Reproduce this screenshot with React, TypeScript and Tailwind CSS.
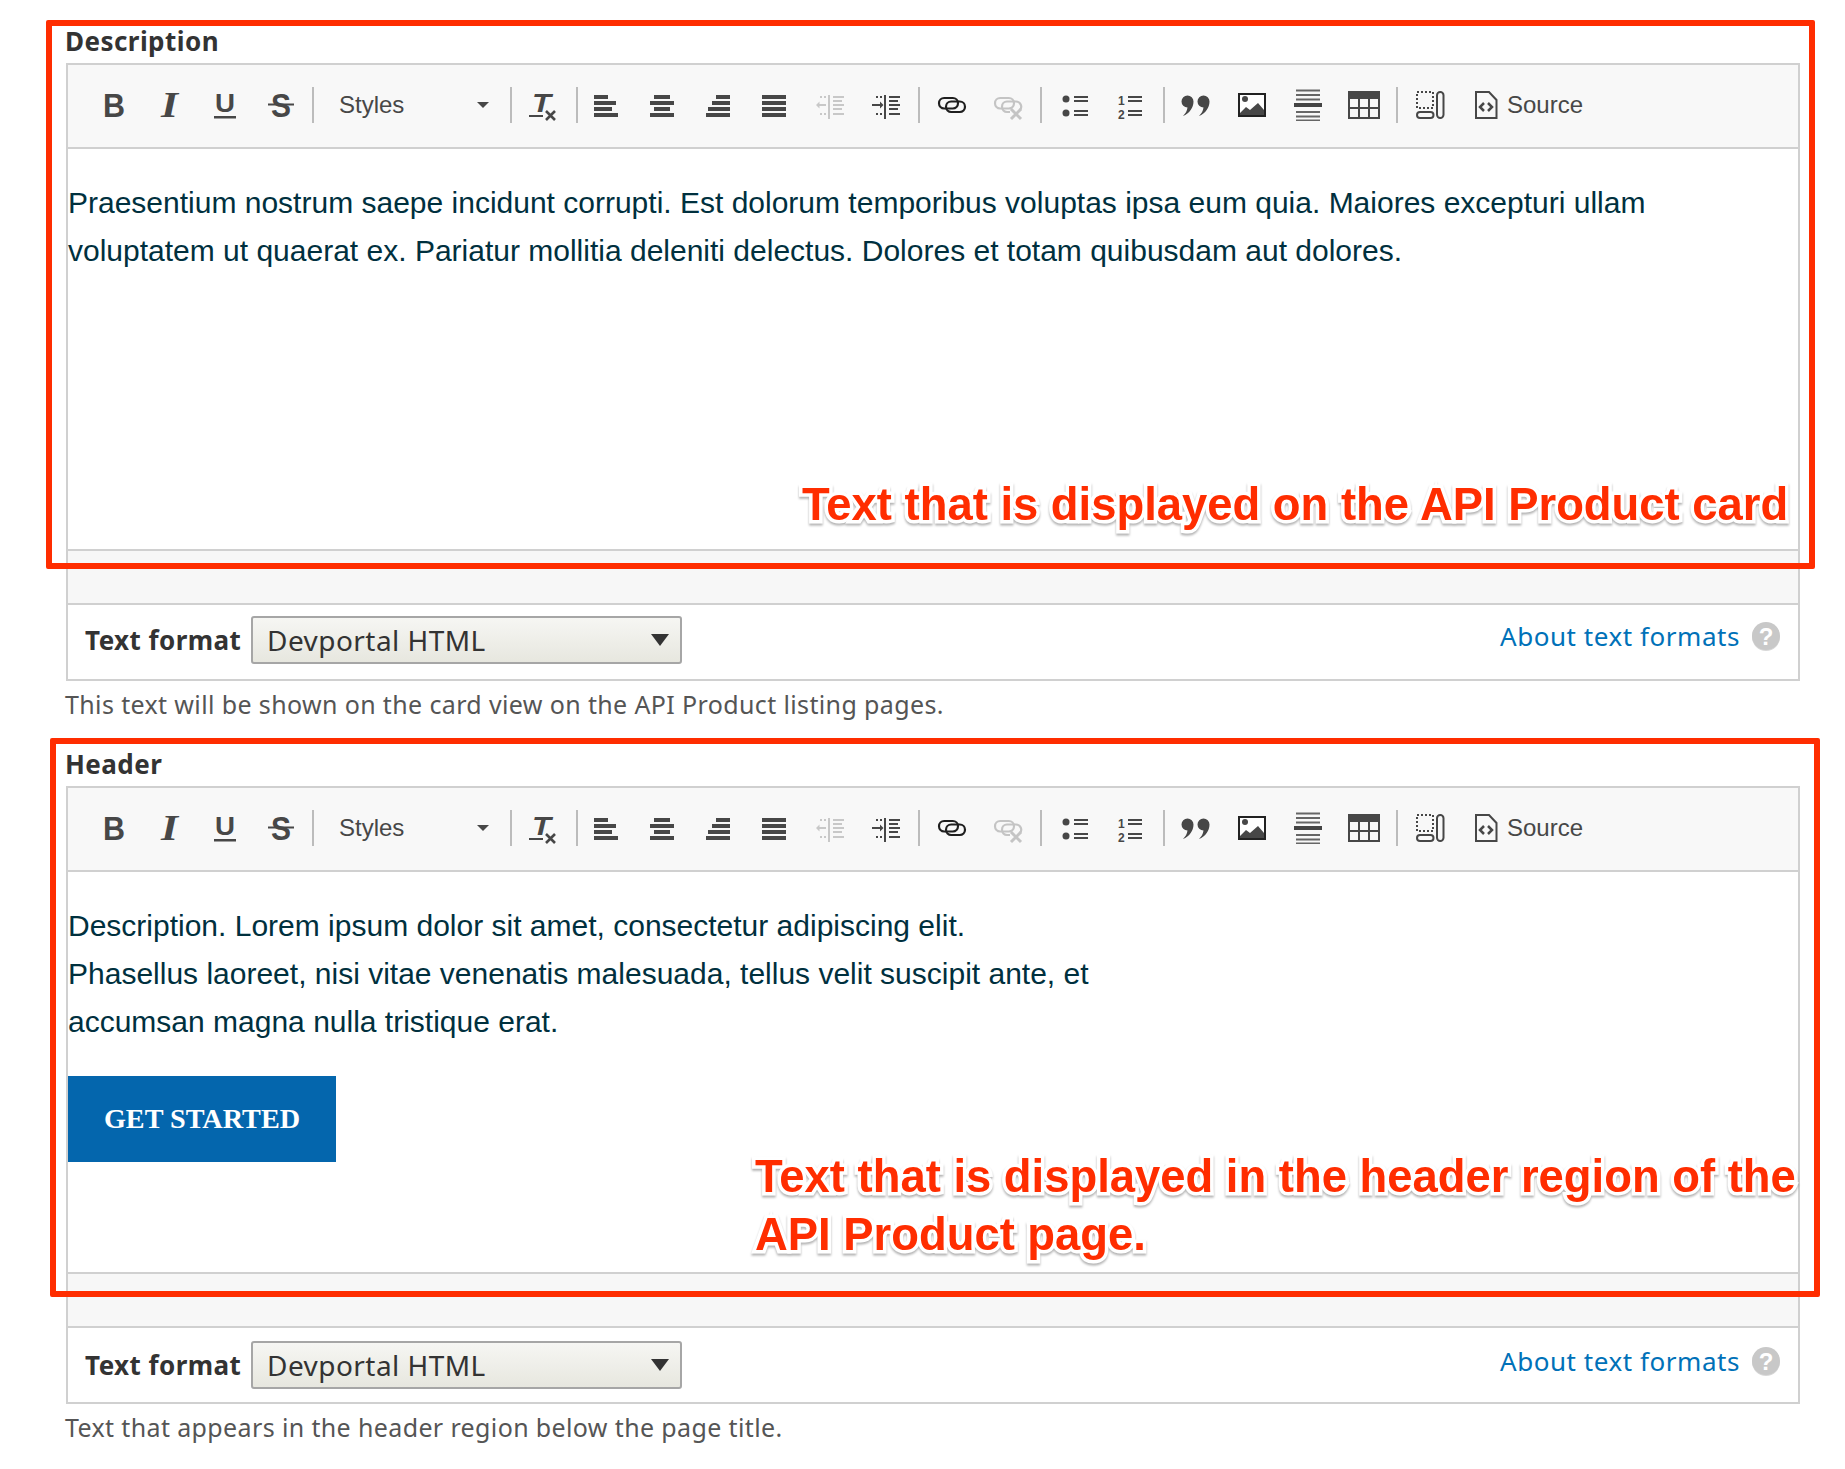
const ink = '#474747';

const Bold = () => (
  <svg width="32" height="32" className="overflow-visible">
    <text x="6" y="28" fontSize="33" fontWeight="700" fontFamily="Liberation Sans" fill={ink} textLength="22" lengthAdjust="spacingAndGlyphs">B</text>
  </svg>
);

const Italic = () => (
  <svg width="32" height="32" className="overflow-visible">
    <text x="8" y="28" fontSize="36" fontWeight="700" fontStyle="italic" fontFamily="Liberation Serif" fill={ink} textLength="17" lengthAdjust="spacingAndGlyphs">I</text>
  </svg>
);

const Underline = () => (
  <svg width="32" height="32" className="overflow-visible">
    <text x="6" y="23" fontSize="26.5" fontWeight="700" fontFamily="Liberation Sans" fill={ink} textLength="20" lengthAdjust="spacingAndGlyphs">U</text>
    <rect x="5" y="27" width="22" height="2.5" fill={ink} />
  </svg>
);

const Strike = () => (
  <svg width="32" height="32" className="overflow-visible">
    <text x="6" y="28" fontSize="33" fontWeight="700" fontFamily="Liberation Sans" fill={ink} textLength="20" lengthAdjust="spacingAndGlyphs">S</text>
    <rect x="3" y="14.5" width="26" height="2" fill={ink} />
  </svg>
);

const RemoveFormat = () => (
  <svg width="32" height="32" className="overflow-visible">
    <text x="6" y="23" fontSize="26" fontWeight="700" fontStyle="italic" fontFamily="Liberation Sans" fill={ink} textLength="19" lengthAdjust="spacingAndGlyphs">T</text>
    <rect x="3" y="26" width="14" height="2" fill={ink} />
    <path d="M20 22l9 9M29 22l-9 9" stroke={ink} strokeWidth="2.6" fill="none" />
  </svg>
);

const Align = ({ rows }: { rows: [number, number][] }) => (
  <svg width="32" height="32">
    {rows.map(([x, w], i) => (
      <rect key={i} x={x} y={6 + i * 6} width={w} height="4" fill={ink} />
    ))}
  </svg>
);

const Indent = ({ color, dir }: { color: string; dir: 'in' | 'out' }) => (
  <svg width="32" height="32">
    <rect x="14" y="6" width="2" height="24" fill={color} />
    {[[7, 11], [11, 9], [15, 11], [19, 9], [24, 11]].map(([y, w]) => (
      <rect key={y} x="19" y={y} width={w} height="2" fill={color} />
    ))}
    {[6, 10].map((x) => (
      <g key={x}>
        <rect x={x} y="7" width="2" height="2" fill={color} />
        <rect x={x} y="24" width="2" height="2" fill={color} />
      </g>
    ))}
    {dir === 'in' ? (
      <path d="M2 15h8v-2.5l3.5 3.5-3.5 3.5V17H2z" fill={color} />
    ) : (
      <path d="M12 15H5.5v-2.5L2 16l3.5 3.5V17H12z" fill={color} />
    )}
  </svg>
);

const Link = () => (
  <svg width="32" height="32" fill="none" stroke="#1f1f1f" strokeWidth="2.2">
    <rect x="3" y="9" width="19" height="10.500" rx="5.200" />
    <rect x="10" y="12.500" width="19" height="10.500" rx="5.200" />
  </svg>
);

const Unlink = () => (
  <svg width="32" height="32" fill="none" stroke="#c4c4c4" strokeWidth="2.2">
    <rect x="3" y="9" width="19" height="10.500" rx="5.200" />
    <path d="M18 23h-3a5.200 5.200 0 0 1-5-5.200 5.200 5.200 0 0 1 5-5.300h9a5.200 5.200 0 0 1 4 8.500" />
    <path d="M19 20l10 10M29 20L19 30" strokeWidth="3" />
  </svg>
);

const Bullets = () => (
  <svg width="32" height="32">
    <circle cx="7" cy="10" r="3.5" fill={ink} />
    <circle cx="7" cy="24" r="3.5" fill={ink} />
    {[7, 11, 21, 25].map((y) => (
      <rect key={y} x="15" y={y} width="14" height="2" fill={ink} />
    ))}
  </svg>
);

const Numbers = () => (
  <svg width="32" height="32">
    <text x="3" y="16" fontSize="12" fontWeight="700" fontFamily="Liberation Sans" fill={ink}>1</text>
    <text x="3" y="30" fontSize="12" fontWeight="700" fontFamily="Liberation Sans" fill={ink}>2</text>
    {[7, 11, 21, 25].map((y) => (
      <rect key={y} x="13" y={y} width="14" height="2" fill={ink} />
    ))}
  </svg>
);

const Quote = () => (
  <svg width="32" height="32" fill={ink}>
    <path d="M7.500 6.500a6 6 0 0 1 6 6c0 6-4 12-10.500 14.500 2.500-2.500 4-5 4.500-8.500a6 6 0 0 1 0-12z" />
    <path d="M23.500 6.500a6 6 0 0 1 6 6c0 6-4 12-10.500 14.500 2.500-2.500 4-5 4.500-8.500a6 6 0 0 1 0-12z" />
  </svg>
);

const ImageIcon = () => (
  <svg width="32" height="32">
    <rect x="3" y="5" width="26" height="22" fill="#fff" stroke="#222" strokeWidth="2" />
    <circle cx="9" cy="10" r="3" fill={ink} />
    <path d="M4 24l6-6 4 3 8-7 6 7v5H4z" fill={ink} />
  </svg>
);

const Rule = () => (
  <svg width="32" height="32" fill="#666">
    {[0.5, 5, 9.5, 22, 26.5, 30.5].map((y) => (
      <rect key={y} x="4" y={y} width="24" height="2" />
    ))}
    <rect x="2" y="14" width="28" height="4" fill="#444" />
  </svg>
);

const TableIcon = () => (
  <svg width="32" height="32">
    <rect x="1" y="3" width="30" height="26" fill="none" stroke={ink} strokeWidth="2" />
    <rect x="0" y="2" width="32" height="8" fill={ink} />
    <path d="M11 9v20M21 9v20M1 19h30" stroke={ink} strokeWidth="2" fill="none" />
  </svg>
);

const Maximize = () => (
  <svg width="32" height="32" fill="none" stroke={ink} strokeWidth="2">
    <rect x="3" y="3" width="16" height="16" strokeDasharray="2 2" />
    <rect x="3" y="23" width="16.500" height="6" rx="3" />
    <rect x="23" y="3" width="6.500" height="26" rx="3.200" />
  </svg>
);

const SourceIcon = () => (
  <svg width="32" height="32" fill="none" stroke={ink} strokeWidth="2">
    <path d="M6 3h13l7.500 8v18H6z" />
    <path d="M14 14l-4 4 4 4M18 14l4 4-4 4" strokeWidth="2.500" />
  </svg>
);

const Btn = ({ children }: { children: React.ReactNode }) => (
  <div className="flex w-[56px] h-[32px] items-center justify-center shrink-0">{children}</div>
);

const Sep = ({ className }: { className: string }) => (
  <div className={`w-[2px] h-[36px] bg-[#bcbcbc] shrink-0 ${className}`} />
);

const Toolbar = () => (
  <div className="flex h-[84px] items-center pl-[17px] pb-[2px] bg-[#f8f8f8] border-b-2 border-[#d0d0d0]">
    <Btn><Bold /></Btn>
    <Btn><Italic /></Btn>
    <Btn><Underline /></Btn>
    <Btn><Strike /></Btn>
    <Sep className="ml-[3px]" />
    <div className="flex w-[196px] h-[32px] items-center pl-[25px] pr-[21px] justify-between text-[24px] text-[#474747] font-['Liberation_Sans',sans-serif]">
      <span>Styles</span>
      <svg width="12" height="6"><path d="M0 0h12L6 6z" fill={ink} /></svg>
    </div>
    <Sep className="mr-[2px]" />
    <Btn><RemoveFormat /></Btn>
    <Sep className="ml-[6px]" />
    <Btn><Align rows={[[4, 14], [4, 22], [4, 18], [4, 24]]} /></Btn>
    <Btn><Align rows={[[8, 16], [4, 24], [8, 16], [4, 24]]} /></Btn>
    <Btn><Align rows={[[14, 14], [10, 18], [6, 22], [4, 24]]} /></Btn>
    <Btn><Align rows={[[4, 24], [4, 24], [4, 24], [4, 24]]} /></Btn>
    <Btn><Indent color="#c8c8c8" dir="out" /></Btn>
    <Btn><Indent color={ink} dir="in" /></Btn>
    <Sep className="ml-[4px] mr-[4px]" />
    <Btn><Link /></Btn>
    <Btn><Unlink /></Btn>
    <Sep className="ml-[4px] mr-[5px]" />
    <Btn><Bullets /></Btn>
    <Btn><Numbers /></Btn>
    <Sep className="ml-[4px] mr-[3px]" />
    <Btn><Quote /></Btn>
    <Btn><ImageIcon /></Btn>
    <Btn><Rule /></Btn>
    <Btn><TableIcon /></Btn>
    <Sep className="ml-[4px] mr-[4px]" />
    <Btn><Maximize /></Btn>
    <Btn><SourceIcon /></Btn>
    <span className="ml-[-7px] text-[24px] text-[#474747] font-['Liberation_Sans',sans-serif]">Source</span>
  </div>
);

const Field = ({ label, hint, rowPad, children }: { label: string; hint: string; rowPad: string; children: React.ReactNode }) => (
  <div className={`flex flex-col h-[723px] pl-[65px] pr-[45px]`}>
    <label className="h-[34px] text-[26px] tracking-[0.45px] leading-[24px] font-bold text-[#333] font-['Noto_Sans',sans-serif]">{label}</label>
    <div className="flex flex-col ml-[1px] h-[618px] border-2 border-[#d0d0d0]">
      <Toolbar />
      <div className="h-[402px] pt-[30px] text-[30px] leading-[48px] text-[#00303e] font-['Liberation_Sans',sans-serif] border-b-2 border-[#d0d0d0]">
        {children}
      </div>
      <div className="h-[54px] bg-[#f7f7f7] border-b-2 border-[#d0d0d0]" />
      <div className={`flex flex-1 items-start justify-between pl-[17px] pr-[18px] font-['Noto_Sans',sans-serif] ${rowPad}`}>
        <div className="flex items-center">
          <span className="w-[166px] mt-[1px] text-[26px] tracking-[0.45px] font-bold text-[#333]">Text format</span>
          <div className="flex w-[431px] h-[48px] items-center justify-between pl-[14px] pr-[11px] rounded-[3px] border-2 border-[#a6a6a6] bg-gradient-to-b from-[#f6f6f3] to-[#e7e7df] text-[28px] tracking-[0.45px] text-[#333]">
            <span>Devportal HTML</span>
            <svg width="18" height="12"><path d="M0 0h18L9 12z" fill="#333" /></svg>
          </div>
        </div>
        <div className="flex items-center gap-[12px] mt-[5px]">
          <span className="text-[26px] tracking-[0.55px] leading-[30px] text-[#0071b8]">About text formats</span>
          <svg width="28" height="29">
            <circle cx="14" cy="15" r="14" fill="#d8d8d8" />
            <circle cx="14" cy="14" r="14" fill="#c8c8c8" />
            <text x="14" y="23" textAnchor="middle" fontSize="24" fontWeight="700" fontFamily="Liberation Sans" fill="#fff">?</text>
          </svg>
        </div>
      </div>
    </div>
    <div className="mt-[7px] text-[25px] tracking-[0.37px] leading-[32px] text-[#555] font-['Noto_Sans',sans-serif]">{hint}</div>
  </div>
);

const annotation =
  "absolute font-['Liberation_Sans',sans-serif] font-bold text-[#ff2d00] text-[45.4px] leading-[58px] whitespace-nowrap [-webkit-text-stroke:7px_white] [paint-order:stroke_fill] drop-shadow-[0_2px_1px_rgba(0,0,0,0.3)]";

export default function App() {
  return (
    <div className="relative w-[1845px] h-[1469px] bg-white overflow-hidden pt-[29px]">
      <Field
        label="Description"
        hint="This text will be shown on the card view on the API Product listing pages."
        rowPad="pt-[11px]"
      >
        <p className="whitespace-nowrap">
          Praesentium nostrum saepe incidunt corrupti. Est dolorum temporibus voluptas ipsa eum quia. Maiores excepturi ullam
          <br />
          voluptatem ut quaerat ex. Pariatur mollitia deleniti delectus. Dolores et totam quibusdam aut dolores.
        </p>
      </Field>
      <Field label="Header" hint="Text that appears in the header region below the page title." rowPad="pt-[13px]">
        <p>
          Description. Lorem ipsum dolor sit amet, consectetur adipiscing elit.
          <br />
          Phasellus laoreet, nisi vitae venenatis malesuada, tellus velit suscipit ante, et
          <br />
          accumsan magna nulla tristique erat.
        </p>
        <div className="flex w-[268px] h-[86px] mt-[30px] items-center justify-center bg-[#0466ad] text-white font-bold text-[28.2px] font-['Liberation_Serif',serif]">
          GET STARTED
        </div>
      </Field>

      {/* red annotation frames */}
      <div className="absolute left-[46px] top-[20px] w-[1769px] h-[549px] border-[6px] border-[#ff2d00] rounded-[2px]" />
      <div className={`${annotation} left-[802px] top-[476px]`}>Text that is displayed on the API Product card</div>
      <div className="absolute left-[50px] top-[738px] w-[1770px] h-[559px] border-[6px] border-[#ff2d00] rounded-[2px]" />
      <div className={`${annotation} left-[755px] top-[1148px]`}>
        Text that is displayed in the header region of the
        <br />
        API Product page.
      </div>
    </div>
  );
}
